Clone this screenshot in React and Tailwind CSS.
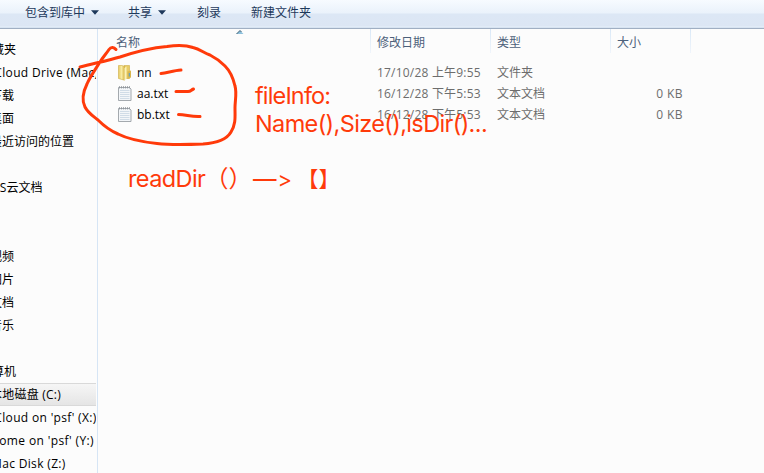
import React from 'react';

const SIDEBAR = [
  { text: '收藏夹', cls: '-ml-[20px]' },
  { text: 'iCloud Drive (Mac)', cls: '-ml-[9px] tracking-[0.33px]' },
  { text: '下载', cls: '-ml-[10px]' },
  { text: '桌面', cls: '-ml-[10px]' },
  { text: '最近访问的位置', cls: '-ml-[10px]' },
  null,
  { text: 'WPS云文档', cls: '-ml-[18.5px]' },
  null,
  null,
  { text: '视频', cls: '-ml-[10px]' },
  { text: '图片', cls: '-ml-[10px]' },
  { text: '文档', cls: '-ml-[10px]' },
  { text: '音乐', cls: '-ml-[10px]' },
  null,
  { text: '计算机', cls: '-ml-[20px]' },
  { text: '本地磁盘 (C:)', cls: '-ml-[10px] tracking-[0.22px]', selected: true },
  { text: "iCloud on 'psf' (X:)", cls: '-ml-[9px] tracking-[0.33px]' },
  { text: "Home on 'psf' (Y:)", cls: '-ml-[10px] tracking-[0.38px]' },
  { text: 'Mac Disk (Z:)', cls: '-ml-[9px] tracking-[0.34px]' },
];

const FILES = [
  { name: 'nn', date: '17/10/28 上午9:55', type: '文件夹', size: '', folder: true },
  { name: 'aa.txt', date: '16/12/28 下午5:53', type: '文本文档', size: '0 KB' },
  { name: 'bb.txt', date: '16/12/28 下午5:53', type: '文本文档', size: '0 KB' },
];

function Caret() {
  return (
    <svg width="8" height="5" viewBox="0 0 8 5" className="ml-[5.5px]">
      <path d="M0 0.3H8L4 4.8Z" fill="#1e395b" />
    </svg>
  );
}

function FolderIcon() {
  return (
    <svg width="16" height="17" viewBox="0 0 16 17">
      <defs>
        <linearGradient id="folder" x1="0" x2="1">
          <stop offset="0" stopColor="#e6c95f" />
          <stop offset="0.5" stopColor="#f8eba2" />
          <stop offset="1" stopColor="#dab748" />
        </linearGradient>
      </defs>
      <path d="M6 1.5H11.5V14.5H6Z" fill="#e8cc66" stroke="#cfae48" strokeWidth="0.6" />
      <path d="M9.5 7.5L13 6.5V13.5L9.5 15Z" fill="#d9b74f" />
      <path d="M11.3 9V12.5" stroke="#4f9fd0" strokeWidth="1" />
      <path d="M0.5 1.5H4L6.5 2.5V16.2L0.5 14.5Z" fill="url(#folder)" stroke="#cfae48" strokeWidth="0.6" />
      <path d="M6.5 4L8.5 2.5V15L6.5 16.2Z" fill="#fbf2b8" />
    </svg>
  );
}

function TextIcon() {
  return (
    <svg width="16" height="17" viewBox="0 0 16 17">
      <path d="M0.5 2.5H11.5L13 4V15.5H0.5Z" fill="#f3f6f9" stroke="#9a9fa5" strokeWidth="0.9" />
      <path d="M2 5.5H11.5M2 7.5H11.5M2 9.5H11.5M2 11.5H11.5M2 13.5H11.5" stroke="#c6d6e2" strokeWidth="0.8" />
      <path d="M1.5 1V3.5M3.5 1V3.5M5.5 1V3.5M7.5 1V3.5M9.5 1V3.5M11.5 1V3.5" stroke="#8a8f95" strokeWidth="0.7" />
    </svg>
  );
}

function HeaderCell({ children, className }) {
  return (
    <div className={`relative h-[27px] shrink-0 pt-[5px] leading-[18px] text-[#4c607a] ${className}`}>
      {children}
      <span className="absolute right-0 top-0 h-[24px] w-px bg-gradient-to-b from-[#d9e8f7] to-[#f0f5fb]" />
    </div>
  );
}

export default function App() {
  return (
    <div className="relative flex h-[473px] w-[764px] flex-col overflow-hidden bg-[#fcfcfc] font-['Open_Sans','Noto_Sans_CJK_SC',sans-serif] text-[12px] whitespace-nowrap text-black">
      <div className="flex h-[29px] shrink-0 items-center border-b border-[#a0afc3] bg-[linear-gradient(#f7fbff_0px,#eaf2fb_13px,#dce7f5_14px,#dce6f4_26px,#e6f0fa_27px,#c9d7e8_28px)] pb-[3px] pl-[25px] text-[#1e395b]">
        <span className="flex w-[103px] items-center">包含到库中<Caret /></span>
        <span className="flex w-[69px] items-center">共享<Caret /></span>
        <span className="w-[54px]">刻录</span>
        <span>新建文件夹</span>
      </div>

      <div className="flex min-h-0 flex-1">
        <nav className="w-[98px] shrink-0 overflow-hidden border-r border-[#d6e5f5] pt-[9px]">
          {SIDEBAR.map((item, i) => (
            <div
              key={i}
              className={
                item && item.selected
                  ? 'mr-px h-[23px] overflow-hidden border-y border-[#d9d9d9] bg-gradient-to-b from-[#f6f6f6] to-[#e5e5e5] leading-[22px]'
                  : 'mr-px h-[23px] overflow-hidden leading-[24px]'
              }
            >
              {item && <span className={`inline-block ${item.cls}`}>{item.text}</span>}
            </div>
          ))}
        </nav>

        <main className="flex-1">
          <div className="flex h-[33px]">
            <HeaderCell className="w-[273px] pl-[18px]">
              名称
              <svg width="8" height="4" viewBox="0 0 8 4" className="absolute left-[138px] top-px">
                <path d="M0.5 4L4 0.5L7.5 4Z" fill="#8cc0dc" />
                <path d="M0.5 4L4 0.5L5.5 2" fill="none" stroke="#3c5e72" strokeWidth="1" />
              </svg>
            </HeaderCell>
            <HeaderCell className="w-[120px] pl-[6px]">修改日期</HeaderCell>
            <HeaderCell className="w-[120px] pl-[6px]">类型</HeaderCell>
            <HeaderCell className="w-[80px] pl-[6px]">大小</HeaderCell>
          </div>
          {FILES.map((f) => (
            <div key={f.name} className="flex h-[21px] items-center text-[#6d6d6d]">
              <div className="flex w-[279px] items-center pl-[20px] text-black">
                {f.folder ? <FolderIcon /> : <TextIcon />}
                <span className="ml-[3px]">{f.name}</span>
              </div>
              <div className="w-[120px] tracking-[0.2px]">{f.date}</div>
              <div className="w-[120px]">{f.type}</div>
              <div className="w-[66px] text-right tracking-[0.4px]">{f.size}</div>
            </div>
          ))}
        </main>
      </div>

      <svg width="764" height="473" viewBox="0 0 764 473" className="pointer-events-none absolute left-0 top-0" fill="none" stroke="#ff3a0a" strokeWidth="3" strokeLinecap="round" strokeLinejoin="round">
        <path d="M116 49.5C114 47 111 46.5 109 49.5C106 54 103 57 100 62C95 70 90 77 87 84C83 92 82 101 85 107C88 113 93 116 98 120C104 126 111 131 118 134C130 140 143 142 157 143.5C170 145 190 144.5 203 144C217 143 227 139 231 132C236 124 235 117 235 108C235 100 237 93 235 86C233 77 229 70 225 66C220 61 216 58 210 55C204 53 200 49 193 47.5C186 45 176 45 167 46.5C150 48 138 51 120 57C110 60 96 63 80 67" />
        <path d="M161 73.5C168 72.5 174 70.5 181 70" />
        <path d="M176 91.5H188C191 91.5 191 90 193.5 89" />
        <path d="M178.5 114.5C186 114.5 191 117 200 116.5" />
      </svg>

      <div className="pointer-events-none absolute left-[255px] top-[82px] font-['Inter','Noto_Sans_CJK_SC',sans-serif] text-[23.5px] leading-[28px] text-[#ff3a0a] [font-feature-settings:'calt'_0,'liga'_0]">
        <div className="tracking-[-0.85px]">fileInfo:</div>
        <div className="tracking-[-0.63px]">Name(),Size(),isDir()...</div>
      </div>
      <div className="pointer-events-none absolute left-[128px] top-[165px] flex font-['Inter','Noto_Sans_CJK_SC',sans-serif] text-[23.5px] leading-[28px] text-[#ff3a0a] [font-feature-settings:'calt'_0,'liga'_0]">
        <span className="w-[77px] tracking-[-0.6px]">readDir</span>
        <span className="w-[48px]">（）</span>
        <span className="w-[24.5px]">—</span>
        <span className="w-[19.5px] text-[22px]">&gt;</span>
        <span className="text-[21.5px]">【】</span>
      </div>
    </div>
  );
}
